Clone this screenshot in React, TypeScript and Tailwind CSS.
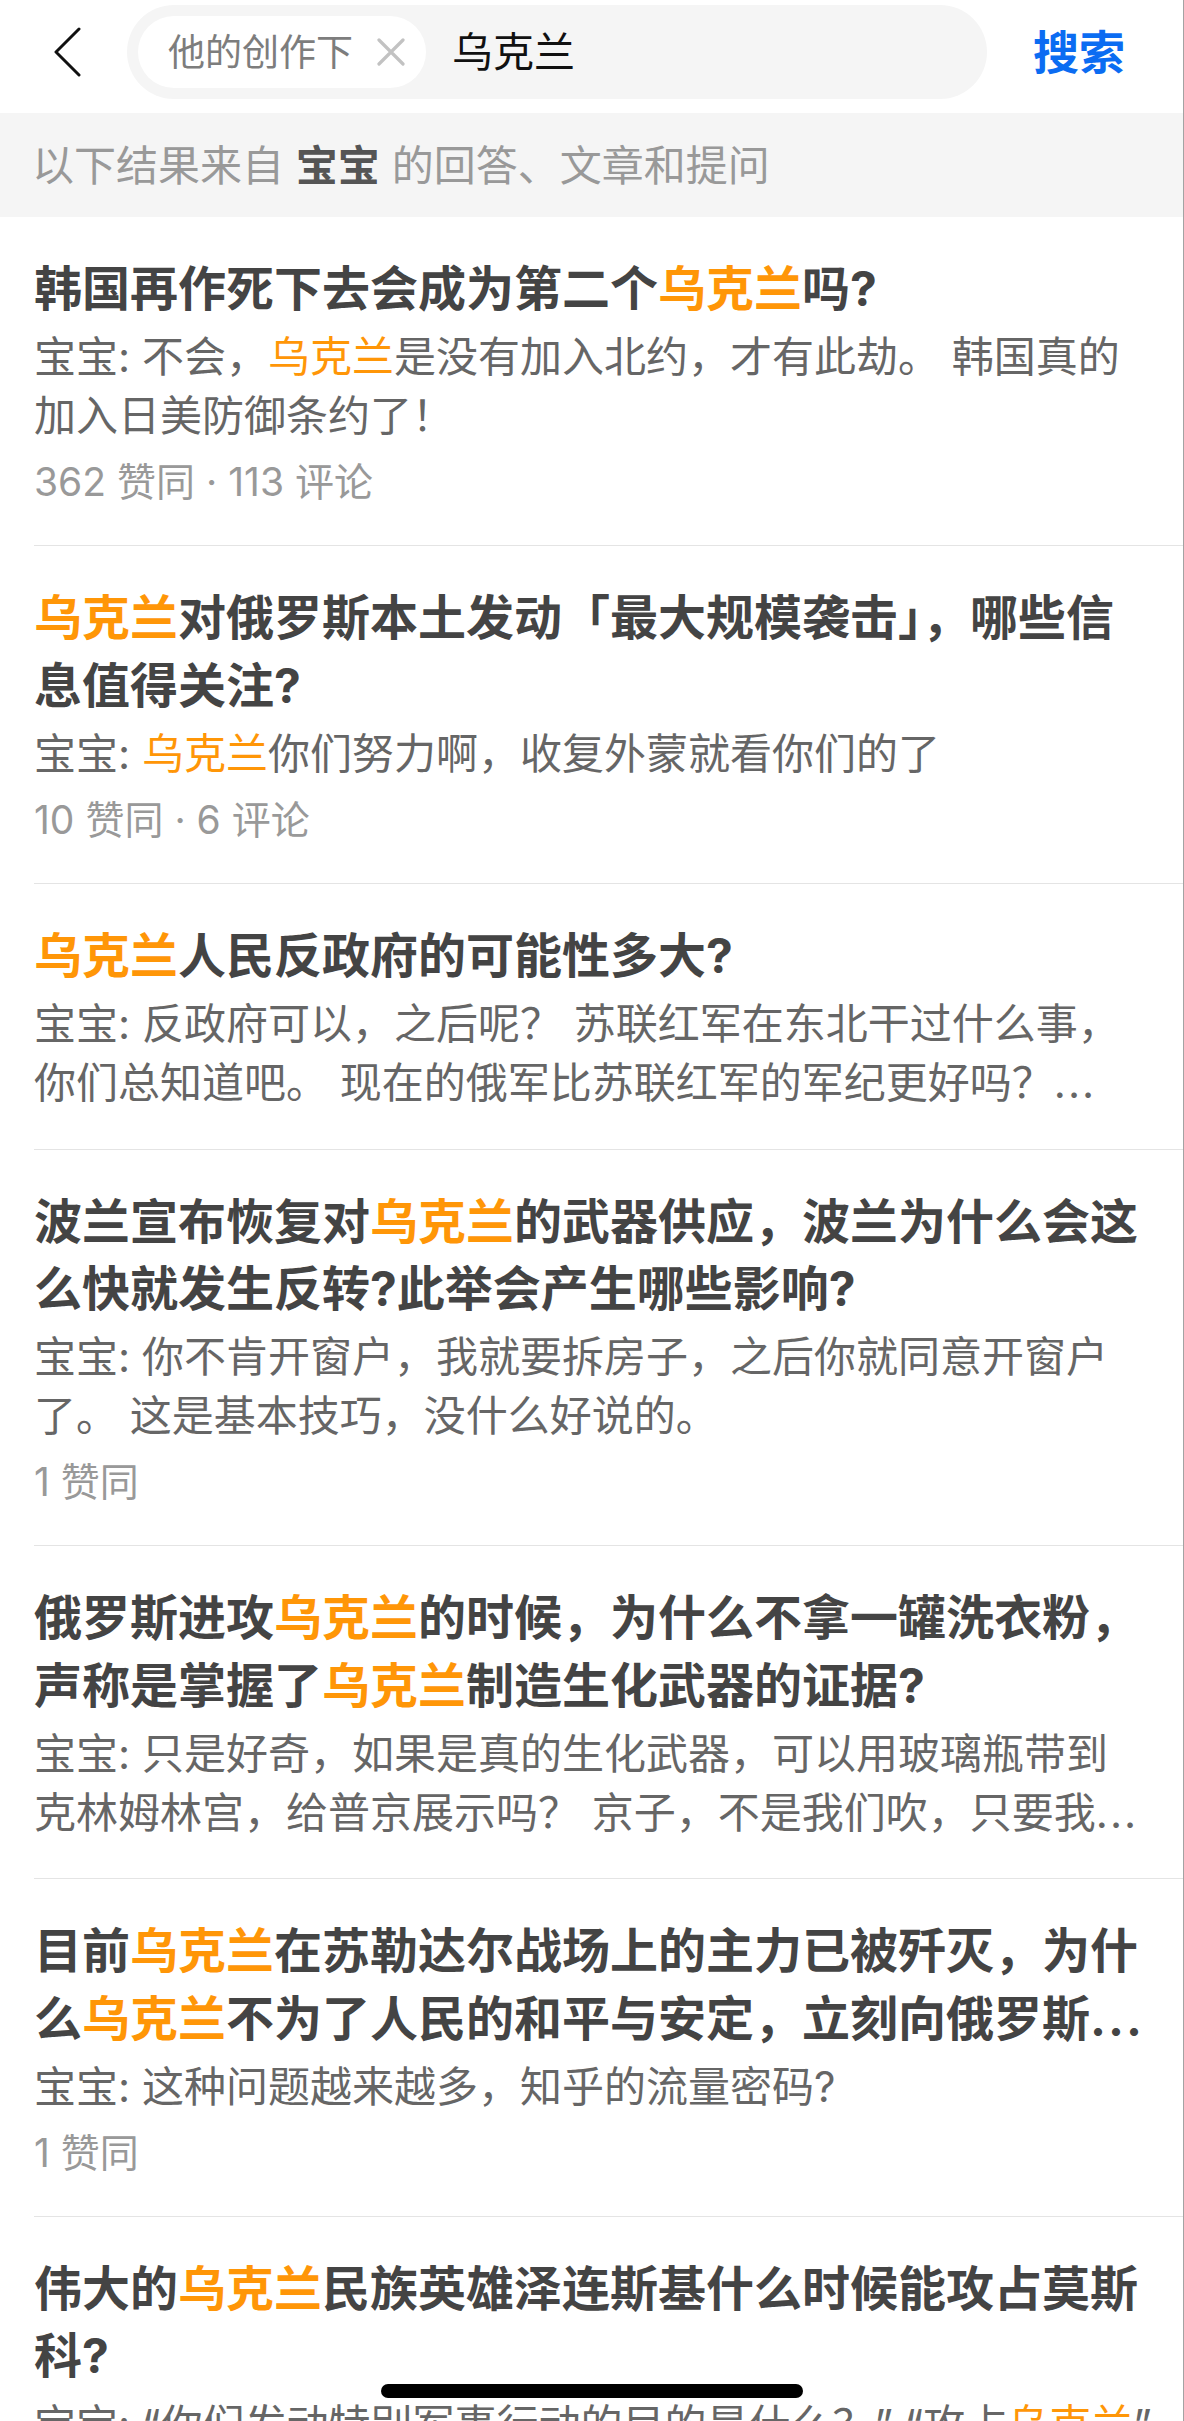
import React from "react";

type Item = {
  title: string[];
  body: string[];
  meta?: string;
};

const items: Item[] = [
  {
    title: ["韩国再作死下去会成为第二个[乌克兰]吗?"],
    body: ["宝宝: 不会，[乌克兰]是没有加入北约，才有此劫。 韩国真的", "加入日美防御条约了！"],
    meta: "362 赞同 · 113 评论",
  },
  {
    title: ["[乌克兰]对俄罗斯本土发动「最大规模袭击」，哪些信", "息值得关注?"],
    body: ["宝宝: [乌克兰]你们努力啊，收复外蒙就看你们的了"],
    meta: "10 赞同 · 6 评论",
  },
  {
    title: ["[乌克兰]人民反政府的可能性多大?"],
    body: ["宝宝: 反政府可以，之后呢？ 苏联红军在东北干过什么事，", "你们总知道吧。 现在的俄军比苏联红军的军纪更好吗？…"],
  },
  {
    title: ["波兰宣布恢复对[乌克兰]的武器供应，波兰为什么会这", "么快就发生反转?此举会产生哪些影响?"],
    body: ["宝宝: 你不肯开窗户，我就要拆房子，之后你就同意开窗户", "了。 这是基本技巧，没什么好说的。"],
    meta: "1 赞同",
  },
  {
    title: ["俄罗斯进攻[乌克兰]的时候，为什么不拿一罐洗衣粉，", "声称是掌握了[乌克兰]制造生化武器的证据?"],
    body: ["宝宝: 只是好奇，如果是真的生化武器，可以用玻璃瓶带到", "克林姆林宫，给普京展示吗？ 京子，不是我们吹，只要我…"],
  },
  {
    title: ["目前[乌克兰]在苏勒达尔战场上的主力已被歼灭，为什", "么[乌克兰]不为了人民的和平与安定，立刻向俄罗斯…"],
    body: ["宝宝: 这种问题越来越多，知乎的流量密码?"],
    meta: "1 赞同",
  },
  {
    title: ["伟大的[乌克兰]民族英雄泽连斯基什么时候能攻占莫斯", "科?"],
    body: ["宝宝: “你们发动特别军事行动的目的是什么？” “攻占[乌克兰]”", "“那你们攻占了吗？”"],
  },
];

// orange keyword + latin-style ellipsis
function Highlighted({ text }: { text: string }) {
  const parts = text.split(/(\[[^\]]+\]|…)/);
  return (
    <>
      {parts.map((p, i) => {
        if (p.startsWith("[")) {
          return (
            <span key={i} className="text-[#ff9607]">
              {p.slice(1, -1)}
            </span>
          );
        }
        if (p === "…") {
          return (
            <span key={i} className="font-['Inter',sans-serif] tracking-[2px]">
              ...
            </span>
          );
        }
        return <React.Fragment key={i}>{p}</React.Fragment>;
      })}
    </>
  );
}

function ResultItem({ item }: { item: Item }) {
  return (
    <div className="ml-[34px] border-b border-[#e4e4e4] pt-[38px] pb-[36px] pr-[40px]">
      <div className="text-[48px] leading-[1.4] font-bold text-[#444]">
        {item.title.map((l, i) => (
          <div key={i} className="whitespace-nowrap">
            <Highlighted text={l} />
          </div>
        ))}
      </div>
      <div className="mt-[6px] text-[42px] leading-[1.4] text-[#666]">
        {item.body.map((l, i) => (
          <div key={i} className="whitespace-nowrap">
            <Highlighted text={l} />
          </div>
        ))}
      </div>
      {item.meta && (
        <div className="mt-[9px] text-[39px] leading-[1.4] text-[#999]">{item.meta}</div>
      )}
    </div>
  );
}

export default function App() {
  return (
    <div className="relative h-[2421px] overflow-hidden bg-white border-r border-[#a3a3a3] font-['Inter','Noto_Sans_CJK_SC',sans-serif]">
      {/* search header */}
      <div className="h-[113px] flex items-start pt-[5px] pl-[54px]">
        <div className="h-[94px] flex items-center">
          <svg width="27" height="50" viewBox="0 0 27 50" fill="none">
            <polyline
              points="25,2 2,25 25,48"
              stroke="#111"
              strokeWidth="3"
              strokeLinecap="round"
              strokeLinejoin="round"
            />
          </svg>
        </div>
        <div className="ml-[46px] w-[860px] h-[94px] rounded-full bg-[#f5f5f5] flex items-center pl-[11px]">
          <div className="h-[72px] w-[288px] rounded-full bg-white flex items-center pl-[30px]">
            <span className="text-[37px] text-[#7d7d7d] leading-none">他的创作下</span>
            <svg className="ml-[24px]" width="28" height="28" viewBox="0 0 28 28">
              <path d="M2 2 L26 26 M26 2 L2 26" stroke="#c2c2c2" strokeWidth="3.2" strokeLinecap="round" />
            </svg>
          </div>
          <span className="ml-[26px] text-[41px] text-[#111] leading-none">乌克兰</span>
        </div>
        <div className="ml-[46px] h-[94px] flex items-center">
          <span className="text-[46px] font-bold text-[#0b6cf2] leading-none">搜索</span>
        </div>
      </div>

      {/* source notice */}
      <div className="h-[104px] bg-[#f5f5f5] flex items-center pl-[32px] text-[42px] text-[#999]">
        <span>
          以下结果来自 <span className="font-bold text-[#555]">宝宝</span> 的回答、文章和提问
        </span>
      </div>

      {items.map((item, i) => (
        <ResultItem key={i} item={item} />
      ))}

      {/* home indicator */}
      <div className="absolute bottom-[23px] left-1/2 -translate-x-1/2 w-[422px] h-[14px] rounded-full bg-black" />
    </div>
  );
}
